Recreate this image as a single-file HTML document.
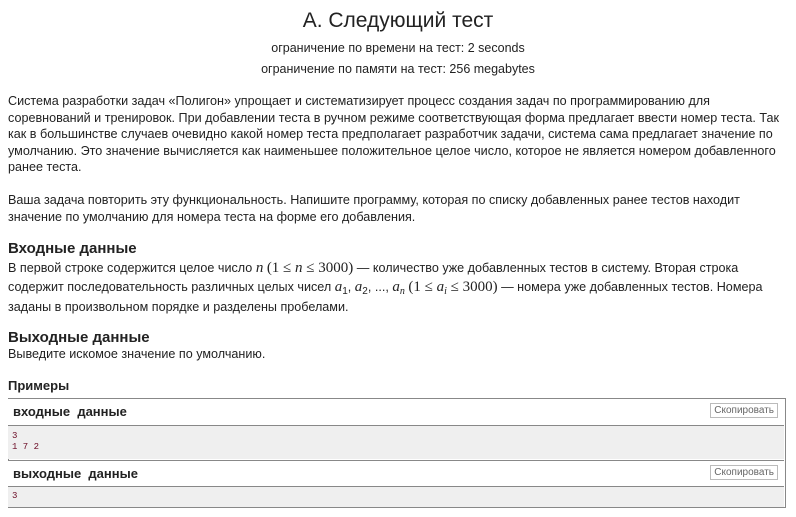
<!DOCTYPE html>
<html><head><meta charset="utf-8"><style>
body{margin:0;width:796px;height:517px;background:#fff;font-family:"Liberation Sans",Arial,sans-serif;color:#222;overflow:hidden;position:relative}
.a{position:absolute;white-space:nowrap}
.t{font-size:12.6px;line-height:16.6px;left:8px}
.c{left:0;width:796px;text-align:center}
.h{font-size:15px;font-weight:bold;left:8px}
.m{font-family:"Liberation Serif",serif;font-style:italic;font-size:15px}
.r{font-family:"Liberation Serif",serif;font-size:15px}
sub{font-size:10px;vertical-align:baseline;position:relative;top:3px}
.box{position:absolute;left:8px;width:776px;border:1px solid #888}
.hd{position:absolute;left:8px;width:776px;height:26px;background:#fff;font-weight:bold;font-size:13px}
.pre{position:absolute;left:8px;width:776px;background:#efefef;font-family:"Liberation Mono",monospace;font-size:9px;color:#6a0a24;line-height:11px;padding-left:4px;box-sizing:border-box}
.btn{position:absolute;right:6px;top:4px;border:1px solid #bbb;font-size:10px;color:#666;padding:1px 3px;font-weight:normal;background:#fff}
</style></head><body>
<div class="a c" style="top:9px;font-size:21px">A. Следующий тест</div>
<div class="a c" style="top:41px;font-size:12.5px">ограничение по времени на тест: 2 seconds</div>
<div class="a c" style="top:62px;font-size:12.5px">ограничение по памяти на тест: 256 megabytes</div>
<div class="a t" style="top:93px">Система разработки задач «Полигон» упрощает и систематизирует процесс создания задач по программированию для<br>соревнований и тренировок. При добавлении теста в ручном режиме соответствующая форма предлагает ввести номер теста. Так<br>как в большинстве случаев очевидно какой номер теста предполагает разработчик задачи, система сама предлагает значение по<br>умолчанию. Это значение вычисляется как наименьшее положительное целое число, которое не является номером добавленного<br>ранее теста.</div>
<div class="a t" style="top:192px">Ваша задача повторить эту функциональность. Напишите программу, которая по списку добавленных ранее тестов находит<br>значение по умолчанию для номера теста на форме его добавления.</div>
<div class="a h" style="top:240px">Входные данные</div>
<div class="a t" style="top:259px;line-height:18.5px">В первой строке содержится целое число <span class="m">n</span> <span class="r">(1 ≤ <i>n</i> ≤ 3000)</span> — количество уже добавленных тестов в систему. Вторая строка<br>содержит последовательность различных целых чисел <span class="m">a</span><sub>1</sub>, <span class="m">a</span><sub>2</sub>, ..., <span class="m">a<sub>n</sub></span> <span class="r">(1 ≤ <i>a<sub>i</sub></i> ≤ 3000)</span> — номера уже добавленных тестов. Номера<br>заданы в произвольном порядке и разделены пробелами.</div>
<div class="a h" style="top:329px">Выходные данные</div>
<div class="a t" style="top:346px">Выведите искомое значение по умолчанию.</div>
<div class="a h" style="top:378px;font-size:13px">Примеры</div>
<div class="box" style="top:398px;height:108px"></div>
<div class="hd" style="top:399px"><span class="a" style="left:5px;top:5px">входные&nbsp; данные</span><span class="btn">Скопировать</span></div>
<div class="pre" style="top:425px;height:34px;border-top:1px solid #888;padding-top:5px">3<br>1 7 2</div>
<div class="hd" style="top:460px;border-top:1px solid #888"><span class="a" style="left:5px;top:5px">выходные&nbsp; данные</span><span class="btn">Скопировать</span></div>
<div class="pre" style="top:486px;height:21px;border-top:1px solid #888;padding-top:4px">3</div>
</body></html>
